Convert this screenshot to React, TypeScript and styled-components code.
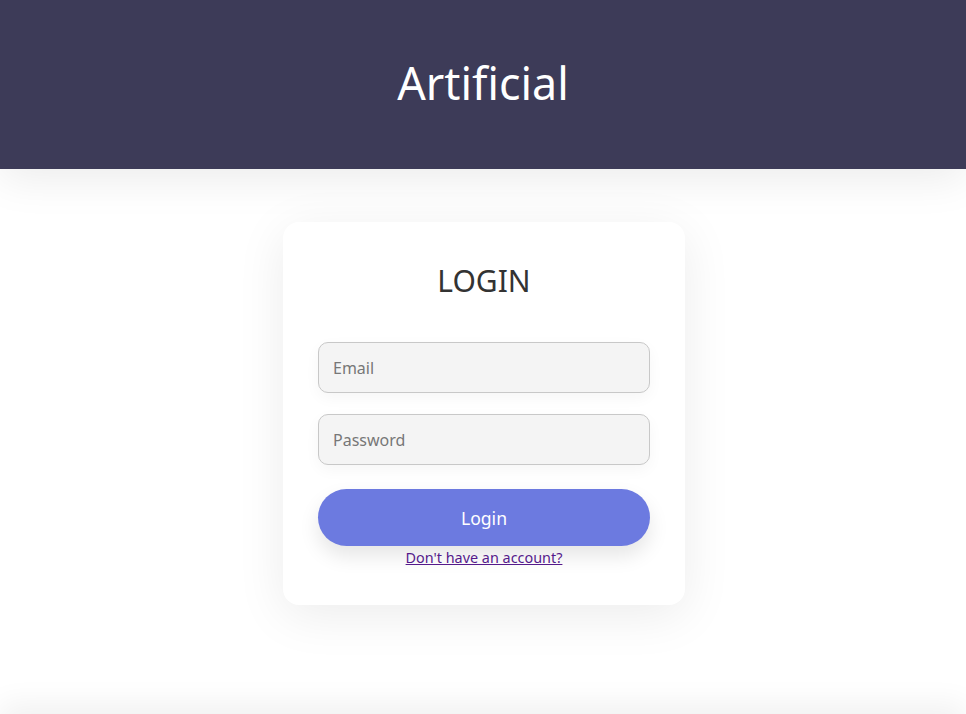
import React from "react";
import styled, { createGlobalStyle } from "styled-components";

const Global = createGlobalStyle`
  html, body { margin: 0; padding: 0; background: #fff; }
  body { font-family: "Noto Sans", "Open Sans", sans-serif; }
  * { box-sizing: border-box; }
`;

const Header = styled.header`
  height: 169px;
  background: #3d3b58;
  display: flex;
  align-items: center;
  justify-content: center;
  box-shadow: 0 10px 40px rgba(0, 0, 0, 0.08);
  position: relative;
  z-index: 1;
`;

const Brand = styled.h1`
  margin: 0;
  color: #fff;
  font-size: 44.8px;
  font-weight: 400;
  line-height: 1.2;
  padding-bottom: 4px;
`;

const Main = styled.main`
  height: 545px;
  display: flex;
  justify-content: center;
  align-items: flex-start;
  padding-top: 53px;
  padding-left: 2px;
`;

const Card = styled.div`
  width: 402px;
  background: #fff;
  border-radius: 16px;
  padding: 38px 35px 38px;
  box-shadow: 0 10px 50px rgba(0, 0, 0, 0.08);
  display: flex;
  flex-direction: column;
  align-items: stretch;
`;

const Title = styled.h2`
  margin: 0 0 41px;
  text-align: center;
  font-size: 30px;
  font-weight: 400;
  color: #333;
  line-height: 41px;
`;

const Input = styled.input<{ $gap: number }>`
  height: 51px;
  width: 100%;
  border: 1px solid #c8c8c8;
  border-radius: 10px;
  background: #f4f4f4;
  padding: 0 14px;
  font-family: inherit;
  font-size: 16px;
  color: #333;
  outline: none;
  box-shadow: 0 5px 15px rgba(0, 0, 0, 0.04);
  margin-bottom: ${(p) => p.$gap}px;
  &::placeholder { color: #777; }
`;

const Button = styled.button`
  height: 57px;
  width: 100%;
  border: none;
  border-radius: 29px;
  background: #6c7ae0;
  color: #fff;
  font-family: inherit;
  font-size: 17.6px;
  cursor: pointer;
  box-shadow: 0 10px 20px rgba(0, 0, 0, 0.1);
`;

const Link = styled.a`
  display: block;
  text-align: center;
  font-size: 14.4px;
  line-height: 19px;
  color: #551a8b;
  text-decoration: underline;
  margin-top: 2px;
`;

const Footer = styled.footer`
  height: 60px;
  background: #fff;
  box-shadow: 0 -10px 30px rgba(0, 0, 0, 0.06);
`;

export default function App() {
  return (
    <>
      <Global />
      <Header>
        <Brand>Artificial</Brand>
      </Header>
      <Main>
        <Card>
          <Title>LOGIN</Title>
          <Input $gap={21} type="email" placeholder="Email" />
          <Input $gap={24} type="password" placeholder="Password" />
          <Button>Login</Button>
          <Link href="#">Don't have an account?</Link>
        </Card>
      </Main>
      <Footer />
    </>
  );
}
